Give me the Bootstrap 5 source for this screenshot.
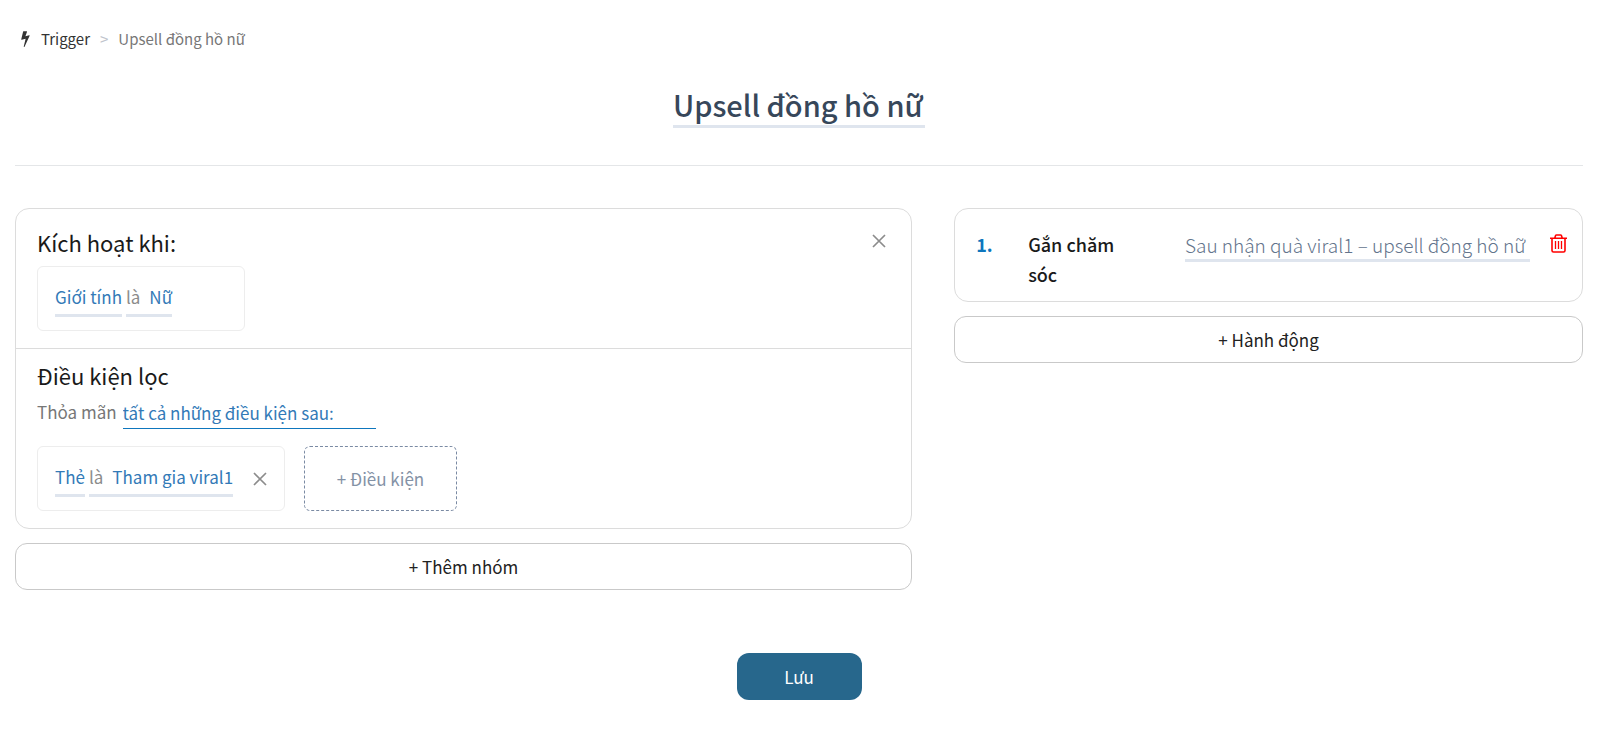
<!DOCTYPE html>
<html lang="vi">
<head>
<meta charset="utf-8">
<meta name="viewport" content="width=device-width, initial-scale=1">
<title>Upsell đồng hồ nữ</title>
<link rel="stylesheet" href="https://cdn.jsdelivr.net/npm/bootstrap@5.3.0/dist/css/bootstrap.min.css">
<style>
  body { font-family: "Noto Sans CJK KR", "Noto Sans CJK SC", sans-serif; font-size: 17px; line-height: 30px; color: #1a1a1a; background: #fff; }
  .page { padding: 24px 17px 48px 15px; }
  .crumbs { font-size: 15px; line-height: 30px; --bs-breadcrumb-divider: ">"; --bs-breadcrumb-divider-color: #c0c4cc; --bs-breadcrumb-item-padding-x: 10px; padding-left: 6px; }
  .crumbs a { color: #333; gap: 11px; }
  .crumbs .active { color: #777; }
  .title-input { width: 252px; height: 45px; margin-top: 29px; padding: 0; border: 0; border-bottom: 3px solid #dfe5ee; font-size: 29px; font-weight: 500; color: #37475a; background: none; }
  .rule { margin: 37px 0 42px; border-top: 1px solid #e4e6e8; opacity: 1; }
  .builder { --bs-gutter-x: 42px; }
  .panel { border: 1px solid #dcdcdc; border-radius: 14px; }
  .panel h2 { font-size: 22px; line-height: 36px; font-weight: 400; margin: 0; }
  .trigger-part { padding: 15px 21px 17px; border-bottom: 1px solid #dcdcdc; }
  .filter-part { padding: 8px 21px 17px; }
  .rule-box { height: 65px; padding: 0 17px; border: 1px solid #ededed; border-radius: 6px; gap: 4px; }
  .trigger-box { width: 208px; margin-top: 6px; }
  .filter-box { min-width: 248px; }
  .filter-list { margin-top: 17px; gap: 19px; }
  .pick { padding: 0; height: 36px; border: 0; border-bottom: 3px solid #dfe5ee; background: none; color: #337ab7; line-height: 30px; }
  .pick .op { color: #8c8c8c; margin-right: 9px; }
  .icon-btn { padding: 0; border: 0; background: none; color: #8c8c8c; line-height: 0; }
  .close-group { margin: 10px 4px 0 0; }
  .match-label { color: #777; margin-right: 6px; }
  .match-select { appearance: none; width: 253px; height: 32px; padding: 0; border: 0; border-bottom: 1px solid #0e76bd; border-radius: 0; background: none; color: #337ab7; }
  .add-condition { width: 153px; height: 65px; border: 1px dashed #7a8aa3; border-radius: 6px; background: none; color: #8492a6; }
  .wide-btn { height: 47px; margin-top: 14px; border: 1px solid #c9c9c9; border-radius: 12px; background: #fff; color: #222; }
  .action-card { padding: 20px 15px 12px 21px; font-size: 18px; }
  .step { width: 52px; color: #0e76bd; font-weight: 700; }
  .action-name { width: 110px; font-weight: 500; }
  .action-value { width: 345px; height: 33px; padding: 0; border: 0; border-bottom: 3px solid #dfe5ee; background: none; font-size: 19px; font-weight: 300; color: #63748c; }
  .delete { color: #f00; margin: 5px 0 0 20px; }
  .save-row { margin-top: 63px; }
  .save-btn { width: 125px; height: 47px; border: 0; border-radius: 12px; background: #27678c; color: #fff; }
</style>
</head>
<body>
<main class="page">
  <nav class="d-flex" aria-label="breadcrumb">
    <ol class="breadcrumb crumbs align-items-center mb-0">
      <li class="breadcrumb-item"><a href="#" class="d-flex align-items-center text-decoration-none"><svg width="9" height="16" viewBox="440 100 920 1700" fill="currentColor" aria-hidden="true"><path d="M1333 566q18 20 7 44l-540 1157q-13 25-42 25-4 0-14-2-17-5-25.500-19t-4.500-30l197-808-406 101q-4 1-12 1-18 0-31-11-18-15-13-39l201-825q4-14 16-23t28-9h328q19 0 32 12.500t13 29.500q0 8-5 18l-171 463 396-98q8-2 12-2 19 0 34 15z"/></svg>Trigger</a></li>
      <li class="breadcrumb-item active" aria-current="page">Upsell đồng hồ nữ</li>
    </ol>
  </nav>
  <input class="title-input d-block mx-auto" type="text" value="Upsell đồng hồ nữ" aria-label="Tên trigger">
  <hr class="rule">
  <div class="row builder">
    <section class="col-7">
      <div class="panel">
        <div class="trigger-part d-flex justify-content-between align-items-start">
          <div>
            <h2>Kích hoạt khi:</h2>
            <div class="rule-box trigger-box d-flex align-items-center">
              <button type="button" class="pick">Giới tính</button>
              <button type="button" class="pick"><span class="op">là</span>Nữ</button>
            </div>
          </div>
          <button type="button" class="icon-btn close-group" aria-label="Xóa nhóm"><svg width="14" height="14" viewBox="0 0 14 14" fill="none" stroke="currentColor" stroke-width="1.700"><path d="M1 1l12 12M13 1L1 13"/></svg></button>
        </div>
        <div class="filter-part">
          <h2>Điều kiện lọc</h2>
          <div class="d-flex mt-1">
            <label class="match-label" for="match">Thỏa mãn</label>
            <select id="match" class="match-select"><option>tất cả những điều kiện sau:</option></select>
          </div>
          <div class="d-flex filter-list">
            <div class="rule-box filter-box d-flex align-items-center">
              <button type="button" class="pick">Thẻ</button>
              <button type="button" class="pick"><span class="op">là</span>Tham gia viral1</button>
              <button type="button" class="icon-btn ms-auto" aria-label="Xóa điều kiện"><svg width="14" height="14" viewBox="0 0 14 14" fill="none" stroke="currentColor" stroke-width="1.700"><path d="M1 1l12 12M13 1L1 13"/></svg></button>
            </div>
            <button type="button" class="add-condition">+ Điều kiện</button>
          </div>
        </div>
      </div>
      <button type="button" class="wide-btn w-100">+ Thêm nhóm</button>
    </section>
    <section class="col-5">
      <div class="panel action-card d-flex align-items-start">
        <div class="step">1.</div>
        <div class="action-name">Gắn chăm sóc</div>
        <input class="action-value ms-auto" type="text" value="Sau nhận quà viral1 – upsell đồng hồ nữ" aria-label="Gắn chăm sóc">
        <button type="button" class="icon-btn delete" aria-label="Xóa hành động"><svg width="17" height="19" viewBox="0 0 17 19" fill="none" stroke="currentColor" stroke-width="1.600"><path d="M0 4.200h17M4.800 4l.8-2.400q.2-.6 1-.6h3.800q.8 0 1 .6l.8 2.400M2 4.200v12.300q0 1.500 1.500 1.500h10q1.500 0 1.500-1.500V4.200"/><path stroke-width="1.300" d="M5.500 7v8M8.500 7v8M11.500 7v8"/></svg></button>
      </div>
      <button type="button" class="wide-btn w-100">+ Hành động</button>
    </section>
  </div>
  <div class="text-center save-row">
    <button type="button" class="save-btn">Lưu</button>
  </div>
</main>
<script src="https://cdn.jsdelivr.net/npm/bootstrap@5.3.0/dist/js/bootstrap.bundle.min.js"></script>
</body>
</html>
